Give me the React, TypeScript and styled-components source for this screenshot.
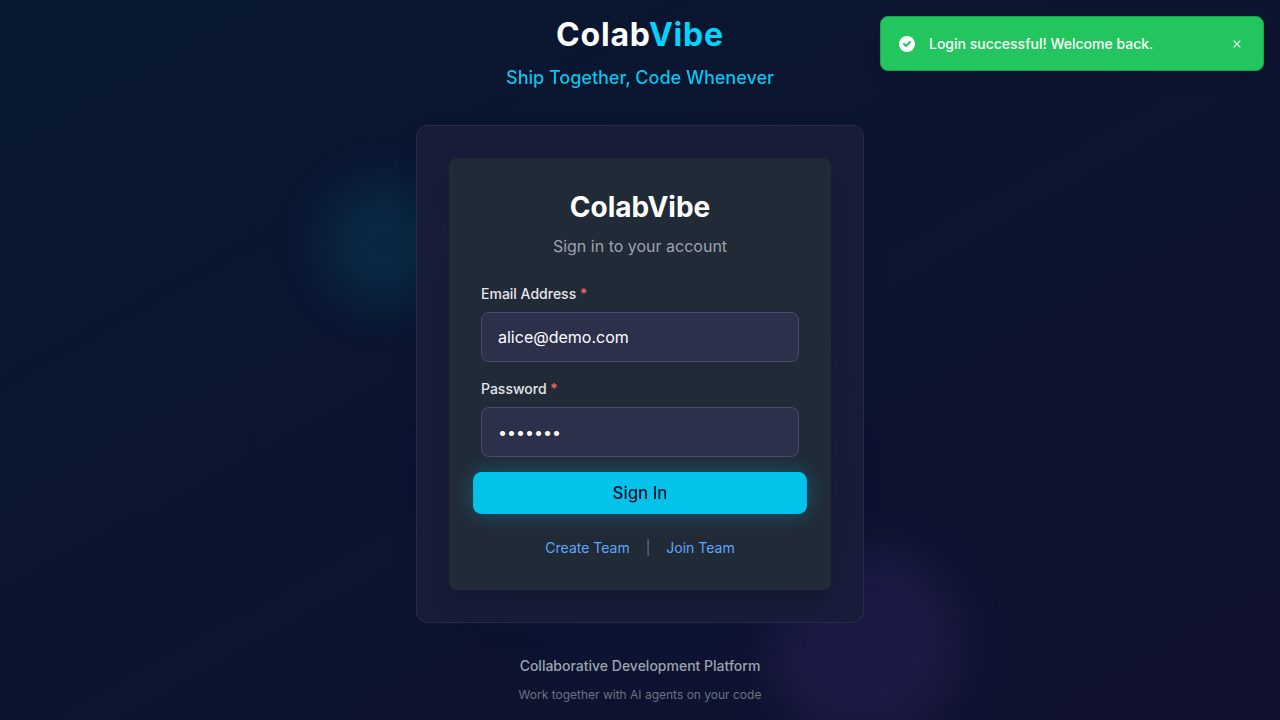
import React, { useState } from "react";
import styled, { createGlobalStyle } from "styled-components";

const GlobalStyle = createGlobalStyle`
  *, *::before, *::after { box-sizing: border-box; }
  body {
    margin: 0;
    font-family: Inter, "Liberation Sans", sans-serif;
    line-height: 1.5;
    color: #fff;
    background: #0b132f;
  }
  h1, h2, p { margin: 0; }
  button, input { font-family: inherit; }
`;

const Page = styled.main`
  position: relative;
  height: 720px;
  overflow: hidden;
  display: flex;
  flex-direction: column;
  align-items: center;
  padding-top: 11px;
  background: linear-gradient(to bottom right, #081831, #10112f);
`;

const Orb = styled.div<{ $size: number; $x: number; $y: number; $color: string; $blur: number }>`
  position: absolute;
  width: ${(p) => p.$size}px;
  height: ${(p) => p.$size}px;
  left: ${(p) => p.$x}px;
  top: ${(p) => p.$y}px;
  border-radius: 50%;
  background: ${(p) => p.$color};
  filter: blur(${(p) => p.$blur}px);
`;

const Header = styled.header`
  position: relative;
  text-align: center;
  margin-bottom: 34px;
`;

const Brand = styled.h1`
  font-size: 32px;
  line-height: 48px;
  font-weight: 700;
  letter-spacing: 0.8px;
  span { color: #00d4ff; }
`;

const Tagline = styled.p`
  margin-top: 5px;
  font-size: 18px;
  line-height: 27px;
  font-weight: 500;
  color: #00d4ff;
  opacity: 0.95;
`;

const Frame = styled.section`
  position: relative;
  width: 448px;
  padding: 32px;
  border: 1px solid rgba(255, 255, 255, 0.08);
  border-radius: 12px;
  background: rgba(26, 29, 58, 0.9);
  box-shadow: 0 8px 24px rgba(0, 0, 0, 0.06);
`;

const Card = styled.form`
  height: 432px;
  padding: 32px;
  border-radius: 8px;
  background: #212a37;
  box-shadow: 0 20px 25px -5px rgba(0, 0, 0, 0.1), 0 8px 10px -6px rgba(0, 0, 0, 0.1);
`;

const CardTitle = styled.h2`
  text-align: center;
  font-size: 28px;
  line-height: 34px;
  font-weight: 700;
`;

const CardSubtitle = styled.p`
  margin: 10px 0 25px;
  text-align: center;
  font-size: 16px;
  line-height: 24px;
  color: #9ca3af;
`;

const Field = styled.label`
  display: block;
  margin-bottom: 16px;
`;

const FieldLabel = styled.span`
  display: block;
  margin-bottom: 8px;
  font-size: 14px;
  line-height: 21px;
  font-weight: 500;
  color: #e5e7eb;
`;

const Required = styled.span`
  color: #f16667;
`;

const Input = styled.input`
  display: block;
  width: 100%;
  height: 50px;
  padding: 0 16px;
  border: 1px solid #484e6a;
  border-radius: 8px;
  outline: none;
  background: #2c304b;
  color: #fff;
  font-size: 16px;
`;

const SubmitButton = styled.button`
  display: block;
  width: 100%;
  height: 40px;
  padding: 0;
  border: 0;
  border-radius: 8px;
  background: #00d4ff;
  color: #0a0f2c;
  font-size: 16px;
  font-weight: 500;
  opacity: 0.9;
  transform: scale(1.05);
  box-shadow: 0 0 20px rgba(0, 212, 255, 0.3);
  cursor: pointer;
`;

const Links = styled.nav`
  display: flex;
  justify-content: center;
  align-items: center;
  gap: 16px;
  margin-top: 24px;
  font-size: 14px;
  line-height: 21px;
`;

const TeamLink = styled.a`
  color: #60a5fa;
  text-decoration: none;
`;

const Divider = styled.span`
  color: #6b7280;
`;

const Footer = styled.footer`
  position: relative;
  margin-top: 32px;
  text-align: center;
`;

const FooterTitle = styled.p`
  font-size: 14px;
  line-height: 21px;
  font-weight: 500;
  color: #9ca3af;
`;

const FooterNote = styled.p`
  margin-top: 10px;
  font-size: 12px;
  line-height: 18px;
  color: #6b7280;
`;

const Toast = styled.div`
  position: absolute;
  top: 16px;
  right: 16px;
  width: 384px;
  height: 55px;
  display: flex;
  align-items: center;
  padding: 0 17px 0 16px;
  border: 1px solid #16a34a;
  border-radius: 8px;
  background: #22c55e;
  box-shadow: 0 10px 15px -3px rgba(0, 0, 0, 0.1);
  font-size: 14px;
  font-weight: 500;
`;

const ToastText = styled.span`
  flex: 1;
  margin-left: 12px;
`;

const CloseButton = styled.button`
  display: flex;
  padding: 4px;
  border: 0;
  background: none;
  color: #fff;
`;

export default function App() {
  const [email, setEmail] = useState("alice@demo.com");
  const [password, setPassword] = useState("demo123");
  return (
    <>
      <GlobalStyle />
      <Page>
        <Orb $size={128} $x={320} $y={180} $color="rgba(0, 212, 255, 0.095)" $blur={24} />
        <Orb $size={192} $x={768} $y={548} $color="rgba(139, 92, 246, 0.115)" $blur={24} />
        <Orb $size={400} $x={440} $y={270} $color="rgba(0, 212, 255, 0.015)" $blur={32} />
        <Header>
          <Brand>Colab<span>Vibe</span></Brand>
          <Tagline>Ship Together, Code Whenever</Tagline>
        </Header>
        <Frame>
          <Card onSubmit={(e) => e.preventDefault()}>
            <CardTitle>ColabVibe</CardTitle>
            <CardSubtitle>Sign in to your account</CardSubtitle>
            <Field>
              <FieldLabel>Email Address <Required>*</Required></FieldLabel>
              <Input type="email" value={email} onChange={(e) => setEmail(e.target.value)} />
            </Field>
            <Field>
              <FieldLabel>Password <Required>*</Required></FieldLabel>
              <Input type="password" value={password} onChange={(e) => setPassword(e.target.value)} />
            </Field>
            <SubmitButton type="submit">Sign In</SubmitButton>
            <Links>
              <TeamLink href="#create">Create Team</TeamLink>
              <Divider>|</Divider>
              <TeamLink href="#join">Join Team</TeamLink>
            </Links>
          </Card>
        </Frame>
        <Footer>
          <FooterTitle>Collaborative Development Platform</FooterTitle>
          <FooterNote>Work together with AI agents on your code</FooterNote>
        </Footer>
        <Toast role="status">
          <svg width="20" height="20" viewBox="0 0 20 20" fill="#fff">
            <path fillRule="evenodd" clipRule="evenodd" d="M10 18a8 8 0 100-16 8 8 0 000 16zm3.707-9.293a1 1 0 00-1.414-1.414L9 10.586 7.707 9.293a1 1 0 00-1.414 1.414l2 2a1 1 0 001.414 0l4-4z" />
          </svg>
          <ToastText>Login successful! Welcome back.</ToastText>
          <CloseButton aria-label="Close">
            <svg width="10" height="10" viewBox="0 0 10 10" stroke="currentColor" strokeWidth="1.2">
              <path d="M1.7 1.7l6.6 6.6M8.3 1.7l-6.6 6.6" />
            </svg>
          </CloseButton>
        </Toast>
      </Page>
    </>
  );
}
